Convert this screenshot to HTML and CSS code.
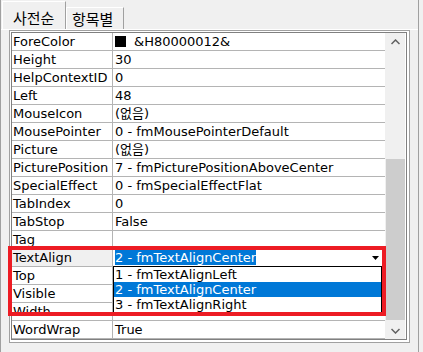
FILE: index.html
```html
<!DOCTYPE html>
<html lang="ko">
  <head>
    <meta charset="UTF-8" />
    <meta name="viewport" content="width=device-width, initial-scale=1.0" />
    <title>속성 창</title>
    <link rel="stylesheet" href="styles.css">
  </head>
  <body>
    <div class="window">
      <!-- Tabs -->
      <div class="tabs">
        <div class="tab active">사전순</div>
        <div class="tab">항목별</div>
      </div>

      <!-- Property grid -->
      <div class="page">
        <div class="grid">
          <div class="grid-inner">
            <div class="rows">
              <div class="row"><div class="name">ForeColor</div><div class="value"><span class="swatch"></span>&amp;H80000012&amp;</div></div>
              <div class="row"><div class="name">Height</div><div class="value">30</div></div>
              <div class="row"><div class="name">HelpContextID</div><div class="value">0</div></div>
              <div class="row"><div class="name">Left</div><div class="value">48</div></div>
              <div class="row"><div class="name">MouseIcon</div><div class="value">(없음)</div></div>
              <div class="row"><div class="name">MousePointer</div><div class="value">0 - fmMousePointerDefault</div></div>
              <div class="row"><div class="name">Picture</div><div class="value">(없음)</div></div>
              <div class="row"><div class="name">PicturePosition</div><div class="value">7 - fmPicturePositionAboveCenter</div></div>
              <div class="row"><div class="name">SpecialEffect</div><div class="value">0 - fmSpecialEffectFlat</div></div>
              <div class="row"><div class="name">TabIndex</div><div class="value">0</div></div>
              <div class="row"><div class="name">TabStop</div><div class="value">False</div></div>
              <div class="row"><div class="name">Tag</div><div class="value"></div></div>
              <div class="row selected">
                <div class="name">TextAlign</div>
                <div class="value combo">
                  <span class="combo-text">2 - fmTextAlignCenter</span>
                  <span class="combo-btn">
                    <svg width="8" height="4" viewBox="0 0 8 4"><path d="M0 0h7L3.5 4z" fill="#000"/></svg>
                  </span>
                  <!-- Open drop-down list -->
                  <div class="dropdown">
                    <div class="option">1 - fmTextAlignLeft</div>
                    <div class="option active">2 - fmTextAlignCenter</div>
                    <div class="option">3 - fmTextAlignRight</div>
                  </div>
                </div>
              </div>
              <div class="row"><div class="name">Top</div><div class="value"></div></div>
              <div class="row"><div class="name">Visible</div><div class="value"></div></div>
              <div class="row"><div class="name">Width</div><div class="value">204</div></div>
              <div class="row"><div class="name">WordWrap</div><div class="value">True</div></div>
            </div>

            <!-- Vertical scrollbar -->
            <div class="scrollbar">
              <div class="arrow">
                <svg width="9" height="6" viewBox="0 0 9 6"><path d="M0.5 5L4.5 1L8.5 5" fill="none" stroke="#606060" stroke-width="1.5"/></svg>
              </div>
              <div class="track"><div class="thumb"></div></div>
              <div class="arrow">
                <svg width="9" height="6" viewBox="0 0 9 6"><path d="M0.5 1L4.5 5L8.5 1" fill="none" stroke="#606060" stroke-width="1.5"/></svg>
              </div>
            </div>
          </div>
        </div>
      </div>

      <!-- Red highlight annotation -->
      <div class="highlight"></div>
    </div>
  </body>
</html>
```

FILE: styles.css
```css
/* Page base */
body {
  margin: 0;
  background-color: #f0f0f0;
  font-family: "DejaVu Sans", "Noto Sans CJK KR", sans-serif;
  font-size: 13px;
  color: #000;
}

/* Outer window */
.window {
  position: relative;
  width: 419px;
  height: 352px;
  box-sizing: border-box;
  border-left: 1px solid #a0a0a0;
  border-right: 1px solid #a0a0a0;
}

/* Tabs */
.tabs {
  display: flex;
  align-items: flex-end;
  height: 29px;
  padding-left: 1px;
}

.tab {
  box-sizing: border-box;
  width: 58px;
  height: 22px;
  padding: 2px 0 0 5px;
  border: 1px solid #fff;
  border-right-color: #a0a0a0;
  border-bottom: none;
  font-family: "Noto Sans CJK KR", sans-serif;
  font-size: 15px;
  line-height: 17px;
}

.tab.active {
  width: 64px;
  height: 28px;
  padding: 7px 0 0 10px;
}

/* Tab page */
.page {
  height: 323px;
  box-sizing: border-box;
  border-top: 1px solid #fff;
  padding-left: 8px;
}

/* Grid frame (sunken, double line) */
.grid {
  width: 401px;
  box-sizing: border-box;
  border: 1px solid #a0a0a0;
  padding: 1px 2px 2px 1px;
  background-color: #fff;
}

.grid-inner {
  display: flex;
  border: 1px solid #808080;
  background-color: #fff;
}

.rows {
  width: 373px;
}

/* Property rows */
.row {
  display: flex;
  height: 17px;
  border-bottom: 1px solid #b4b4b4;
  line-height: 17px;
  white-space: nowrap;
}

.name {
  width: 101px;
  padding-left: 1px;
  box-sizing: border-box;
  border-right: 1px solid #b4b4b4;
  flex-shrink: 0;
}

.value {
  flex: 1;
  padding-left: 2px;
  overflow: hidden;
}

.row.selected .name {
  background-color: #f0f0f0;
}

.swatch {
  display: inline-block;
  width: 11px;
  height: 11px;
  margin: 0 8px -1px 0;
  background-color: #000;
}

/* Combo box inside the selected row */
.combo {
  position: relative;
  display: flex;
  align-items: center;
  overflow: visible;
}

.combo-text {
  height: 15px;
  line-height: 15px;
  background-color: #0078d7;
  color: #fff;
}

.combo-btn {
  display: flex;
  align-items: center;
  justify-content: center;
  width: 15px;
  height: 15px;
  margin-left: auto;
  margin-right: 2px;
}

.dropdown {
  position: absolute;
  top: 17px;
  left: 0;
  width: 269px;
  box-sizing: border-box;
  border: 1px solid #000;
  background-color: #fff;
  z-index: 2;
}

.option {
  height: 15px;
  line-height: 15px;
  padding-left: 1px;
}

.option.active {
  background-color: #0078d7;
  color: #fff;
}

/* Scrollbar */
.scrollbar {
  display: flex;
  flex-direction: column;
  width: 20px;
  background-color: #f0f0f0;
}

.arrow {
  display: flex;
  align-items: center;
  justify-content: center;
  height: 17px;
}

.track {
  flex: 1;
  padding: 109px 0 0 1px;
  box-sizing: border-box;
}

.thumb {
  height: 161px;
  background-color: #cdcdcd;
}

/* Red annotation box */
.highlight {
  position: absolute;
  left: 7px;
  top: 246px;
  width: 378px;
  height: 70px;
  box-sizing: border-box;
  border: 4px solid #ed1c24;
  z-index: 3;
}
```
